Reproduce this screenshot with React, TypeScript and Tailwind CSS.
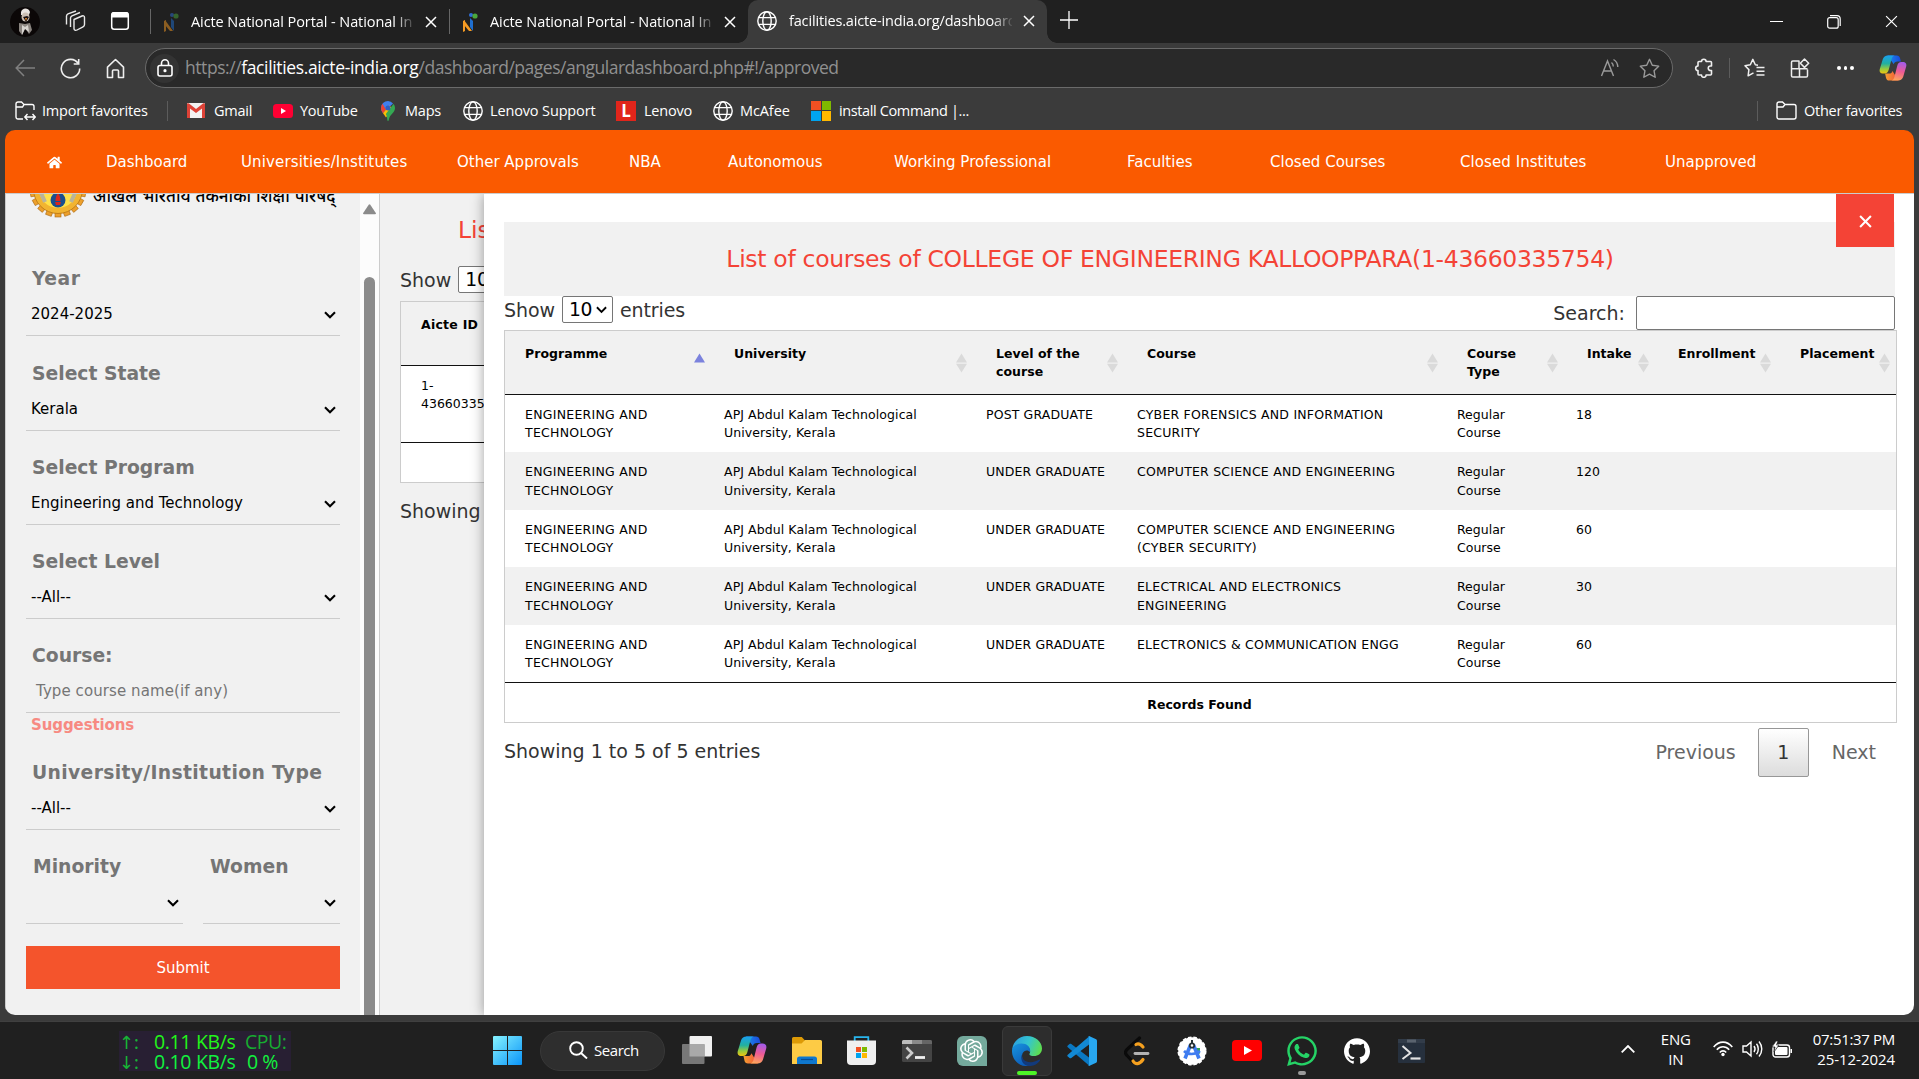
import React from "react";
import { SiOpenai, SiGithub } from "react-icons/si";
import { FaHome, FaWhatsapp } from "react-icons/fa";

const ui = "font-['Open_Sans','Noto_Sans',sans-serif]";
const verdana = "font-['DejaVu_Sans','Noto_Sans',sans-serif]";

/* ---------- small drawings ---------- */

function Globe({ size = 20 }: { size?: number }) {
  return (
    <svg width={size} height={size} viewBox="0 0 20 20" fill="none" stroke="#fff" strokeWidth="1.4" className="shrink-0">
      <circle cx="10" cy="10" r="9.2" />
      <ellipse cx="10" cy="10" rx="4.2" ry="9.2" />
      <path d="M1.8 6.6h16.4M1.8 13.4h16.4" />
    </svg>
  );
}

function Cross({ size = 12, color = "#fff", width = 1.5 }: { size?: number; color?: string; width?: number }) {
  return (
    <svg width={size} height={size} viewBox="0 0 12 12" stroke={color} strokeWidth={width} className="shrink-0">
      <path d="M1 1l10 10M11 1L1 11" />
    </svg>
  );
}

function Favicon() {
  return (
    <svg width="16" height="20" viewBox="0 0 16 20" className="shrink-0">
      <path d="M1 9l2-1v11l-2 1z" fill="#f59a23" />
      <path d="M2 8l8 11H7L2 13z" fill="#f59a23" />
      <path d="M8 6l3 3v10l-3-4z" fill="#1f6fd0" />
      <circle cx="9" cy="3" r="2" fill="#2f6fd8" />
      <circle cx="13" cy="4" r="2.6" fill="#4aa83c" />
    </svg>
  );
}

function Copilot({ id, className }: { id: string; className: string }) {
  return (
    <svg viewBox="0 0 30 28" className={className}>
      <defs>
        <linearGradient id={id + "a"} x1="0" y1="0" x2="0" y2="1">
          <stop offset="0" stopColor="#1aa0f0" />
          <stop offset=".45" stopColor="#22b0a0" />
          <stop offset=".75" stopColor="#9acb3c" />
          <stop offset="1" stopColor="#f2c40f" />
        </linearGradient>
        <linearGradient id={id + "b"} x1="0.6" y1="0" x2="0.4" y2="1">
          <stop offset="0" stopColor="#a35bea" />
          <stop offset=".5" stopColor="#ee5b93" />
          <stop offset="1" stopColor="#fda55c" />
        </linearGradient>
        <linearGradient id={id + "c"} x1="0" y1="0" x2="1" y2="0">
          <stop offset="0" stopColor="#1b8df0" />
          <stop offset="1" stopColor="#1b48d8" />
        </linearGradient>
        <linearGradient id={id + "d"} x1="0" y1="0" x2="1" y2="0">
          <stop offset="0" stopColor="#f5a030" />
          <stop offset="1" stopColor="#f0503c" />
        </linearGradient>
      </defs>
      <path d="M9 0.5h10c2 0 3 1 3.500 2.800l1.100 3.700h-4c-2 0-3.200 1-3.800 3z" fill={"url(#" + id + "c)"} />
      <path d="M21 27.500H11c-2 0-3-1-3.500-2.800L6.500 20h4.300c2 0 3-.8 3.600-2.800z" fill={"url(#" + id + "d)"} />
      <path d="M9.500 0.500h7.300c-2 .5-2.800 2-3.400 4l-3 11.500c-.7 2.600-2 4-4.400 4H4.500C1.500 20 0 18 .8 15L4 4.500C4.800 2 6.800.5 9.500.5z" fill={"url(#" + id + "a)"} />
      <path d="M20.500 27.500h-7.300c2-.5 2.800-2 3.400-4l3-12c.7-2.600 2-4 4.400-4h1.500c3 0 4.500 2 3.700 5L26 23.500c-.8 2.500-2.800 4-5.500 4z" fill={"url(#" + id + "b)"} />
    </svg>
  );
}

function SelectArrow() {
  return (
    <svg width="12" height="8" viewBox="0 0 12 8" fill="none" stroke="#000" strokeWidth="2.1" className="shrink-0">
      <path d="M1 1.300l5 5 5-5" />
    </svg>
  );
}

/* ---------- browser chrome ---------- */

function Tab({ title, width, active, dim }: { title: string; width: string; active?: boolean; dim?: boolean }) {
  return (
    <div className={`flex h-full items-center ${width}`}>
      <div className={`shrink-0 ${active ? "w-[32px]" : "w-[28px]"} ${dim ? "opacity-50" : ""}`}>{active ? <Globe /> : <Favicon />}</div>
      <div className={`mr-[11px] w-[223px] shrink-0 overflow-hidden whitespace-nowrap text-[14.5px] text-white [mask-image:linear-gradient(to_right,#000_91%,transparent_101%)] ${active ? "tracking-[-0.16px]" : "tracking-[-0.08px]"}`}>
        {title}
      </div>
      <Cross />
    </div>
  );
}

function TabBar() {
  return (
    <div className="flex h-[43px] items-center bg-[#202020] pl-[10px]">
      <svg width="30" height="30" viewBox="0 0 30 30">
        <circle cx="15" cy="15" r="15" fill="#0b0707" />
        <path d="M11 5c1-4 7-5 9 0l-1 3h-8z" fill="#e9e4e0" />
        <ellipse cx="15.500" cy="10" rx="4" ry="4.500" fill="#cbbfb4" />
        <path d="M13 10l3 5 3-5-2-1z" fill="#1a1010" />
        <path d="M15 11h2l-1 3z" fill="#e08a2c" />
        <path d="M9 16l6 1 5-1 2 7-3 4-4-6-3 7-3-4z" fill="#8b8580" />
        <path d="M12 18l3 2 3-2 1 7-4-3-3 6z" fill="#d8d4d0" />
      </svg>
      <svg width="22" height="22" viewBox="0 0 22 22" fill="none" stroke="#e8e8e8" strokeWidth="1.400" className="mb-px ml-[24px]">
        <path d="M10 9.500l8-3.500c1.500-.5 2.500 0 2.500 1.500v7c0 1-.5 1.800-1.500 2.300l-6 3.200c-1.500.8-3 .2-3-1.500z" strokeLinejoin="round" />
        <path d="M6.500 17V8c0-1 .5-1.700 1.500-2.200l8-3.300" />
        <path d="M2.500 14.500V6c0-1 .5-1.700 1.500-2.200L12 1" />
      </svg>
      <svg width="20" height="20" viewBox="0 0 20 20" className="mb-[2px] ml-[24px]">
        <rect x="1.700" y="1.700" width="16.600" height="16.600" rx="2.500" fill="none" stroke="#fff" strokeWidth="1.500" />
        <path d="M1.500 3a2 2 0 0 1 2-2h13a2 2 0 0 1 2 2v3.500h-17z" fill="#fff" />
      </svg>
      <div className="ml-5 h-[25px] w-px bg-[#666]" />
      <div className="h-[41px] pl-[12px]"><Tab title="Aicte National Portal - National In" width="w-[286px]" dim /></div>
      <div className="h-[25px] w-px bg-[#666]" />
      <div className="h-[41px] pl-[12px]"><Tab title="Aicte National Portal - National In" width="w-[287px]" /></div>
      <div className="relative ml-[-1px] h-full w-[299px] rounded-t-[10px] bg-[#3b3b3b] pl-[9px]">
        <div className="absolute bottom-0 left-[-10px] size-[10px] bg-[radial-gradient(circle_at_0_0,transparent_9.5px,#3b3b3b_10px)]" />
        <div className="absolute right-[-10px] bottom-0 size-[10px] bg-[radial-gradient(circle_at_100%_0,transparent_9.5px,#3b3b3b_10px)]" />
        <div className="h-[41px]"><Tab title="facilities.aicte-india.org/dashboard" width="w-full" active /></div>
      </div>
      <svg width="18" height="18" viewBox="0 0 18 18" stroke="#fff" strokeWidth="1.300" className="mt-[-3px] ml-[13px]">
        <path d="M9 0v18M0 9h18" />
      </svg>
      <div className="ml-auto flex items-center gap-[44px] pr-[21px]">
        <div className="h-px w-[13px] bg-white" />
        <svg width="14" height="14" viewBox="0 0 14 14" fill="none" stroke="#fff" strokeWidth="1.200">
          <rect x="0.700" y="2.700" width="10.500" height="10.500" rx="2" />
          <path d="M3 .7h7a3.200 3.200 0 0 1 3.200 3.200V11" />
        </svg>
        <Cross size={13} width={1.1} />
      </div>
    </div>
  );
}

function AddressBar() {
  return (
    <div className="flex h-[47px] items-start pt-[5px]">
      <div className="flex h-10 w-[145px] shrink-0 items-center">
        <svg width="20" height="18" viewBox="0 0 20 18" fill="none" stroke="#808080" strokeWidth="1.500" className="ml-[15px]">
          <path d="M9 1L1.200 9 9 17M1.200 9H20" />
        </svg>
        <svg width="21" height="21" viewBox="0 0 21 21" fill="none" stroke="#eee" strokeWidth="1.600" className="ml-[25px]">
          <path d="M18.200 5.500A9.200 9.200 0 1 0 19.700 10.500" />
          <path d="M18.700 1v5h-5" />
        </svg>
        <svg width="19" height="21" viewBox="0 0 19 21" fill="none" stroke="#eee" strokeWidth="1.600" strokeLinejoin="round" className="ml-[25px]">
          <path d="M1.500 9.200L9.500 1.500l8 7.700V19.500h-5v-6.500a1 1 0 0 0-1-1h-4a1 1 0 0 0-1 1v6.500h-5z" />
        </svg>
      </div>
      <div className="flex h-10 w-[1528px] shrink-0 items-center rounded-full border border-[#6a6a6a] bg-[#292929] pl-[4px]">
        <div className="flex size-[29px] items-center justify-center rounded-full bg-[#333]">
          <svg width="16" height="18" viewBox="0 0 16 18" fill="none" stroke="#fff" strokeWidth="1.600">
            <rect x="1" y="6.500" width="14" height="10.500" rx="2" />
            <path d="M4.500 6.500V4.300a3.500 3.500 0 0 1 7 0v2.200" />
            <circle cx="8" cy="11.700" r=".8" fill="#fff" />
          </svg>
        </div>
        <div className="mb-[2px] ml-[6px] text-[17.5px] tracking-[-0.44px] whitespace-nowrap text-[#909090]">
          https://<span className="tracking-[-0.36px] text-white">facilities.aicte-india.org</span><span className="tracking-[-0.480px]">/dashboard/pages/angulardashboard.php#!/approved</span>
        </div>
        <svg width="20" height="20" viewBox="0 0 20 20" fill="none" stroke="#9a9a9a" strokeWidth="1.400" className="ml-auto">
          <path d="M1.500 18L7.500 3l6 15M3.500 13h8M11.500 4.500c1.200 1 1.800 2.300 1.800 4M13.500 1.500c2.700 1.600 4.200 4.300 4.300 7.500" />
        </svg>
        <svg width="21" height="21" viewBox="0 0 24 24" fill="none" stroke="#9a9a9a" strokeWidth="1.600" strokeLinejoin="round" className="mr-3 ml-[19px]">
          <path d="M12 1.500l3.200 6.800 7.300 1-5.300 5.200 1.300 7.500L12 18.400 5.500 22l1.300-7.500L1.500 9.300l7.300-1z" />
        </svg>
      </div>
      <div className="flex h-10 items-center">
        <svg width="20" height="20" viewBox="0 0 20 20" fill="none" stroke="#eee" strokeWidth="1.600" strokeLinejoin="round" className="ml-[21px]">
          <path d="M7.500 3.500a2.300 2.300 0 0 1 4.600 0h4.400a1 1 0 0 1 1 1V8h-1a2.200 2.200 0 0 0 0 4.500h1V16a1 1 0 0 1-1 1h-4.400a2.300 2.300 0 0 1-4.600 0H5a1 1 0 0 1-1-1v-3.400a2.300 2.300 0 0 1 0-4.600V4.500a1 1 0 0 1 1-1z" />
        </svg>
        <div className="ml-[15px] h-5 w-px bg-[#5c5c5c]" />
        <svg width="21" height="20" viewBox="0 0 21 20" fill="none" stroke="#eee" strokeWidth="1.500" strokeLinejoin="round" className="ml-[14px]">
          <path d="M14 7.200l-2.700-.4L8.800 1.400 6.300 6.800 1 7.700l3.900 3.900-.8 6.200 5.400-3M12.500 9.500H20.500M12.500 13.200H20.500M12.500 17H20.500" />
        </svg>
        <svg width="20" height="20" viewBox="0 0 20 20" fill="none" stroke="#eee" strokeWidth="1.500" strokeLinejoin="round" className="ml-[25px]">
          <path d="M9 10V3H2.800A1.300 1.300 0 0 0 1.500 4.300V17.700A1.300 1.300 0 0 0 2.800 19H16.200a1.300 1.300 0 0 0 1.300-1.300V11.500M1.500 10.700H17.500M9.500 10.700V19" />
          <path d="M14.500 1l4.200 4.200-4.200 4.200-4.200-4.200z" />
        </svg>
        <div className="ml-[27px] flex gap-[3px]">
          <i className="size-[3.500px] rounded-full bg-white" />
          <i className="size-[3.500px] rounded-full bg-white" />
          <i className="size-[3.500px] rounded-full bg-white" />
        </div>
        <Copilot id="top" className="ml-[25px] h-[26px] w-[28px]" />
      </div>
    </div>
  );
}

function Favorite({ icon, label, className }: { icon: React.ReactNode; label: string; className: string }) {
  return (
    <div className={`flex shrink-0 items-center text-[14.5px] whitespace-nowrap text-white ${className}`}>
      {icon}
      <span>{label}</span>
    </div>
  );
}

function FavoritesBar() {
  return (
    <div className="flex h-10 items-center pt-px pl-[15px]">
      <Favorite
        className="w-[152px] gap-[6px] tracking-[-0.18px]"
        label="Import favorites"
        icon={
          <svg width="21" height="20" viewBox="0 0 21 20" fill="none" stroke="#fff" strokeWidth="1.400">
            <path d="M8 18H3a2 2 0 0 1-2-2V3a2 2 0 0 1 2-2h3.500l2.500 2.500L7.500 6H1M9 3.500h8a2 2 0 0 1 2 2V9M10 16h10M12.500 13L9.800 16l2.700 3M17.500 13l2.700 3-2.700 3" />
          </svg>
        }
      />
      <div className="h-5 w-px bg-[#5c5c5c]" />
      <Favorite
        className="ml-[19px] w-[86px] gap-[9px] tracking-[-0.25px]"
        label="Gmail"
        icon={
          <svg width="18" height="15" viewBox="0 0 18 15">
            <rect width="18" height="15" rx="1" fill="#f2f2f2" />
            <path d="M0 15V1.500C0 0 1 0 2 .5l7 5.500 7-5.500c1-.5 2-.5 2 1V15h-3V5.500L9 10 3 5.500V15z" fill="#dd4237" />
          </svg>
        }
      />
      <Favorite
        className="w-[108px] gap-[7px] tracking-[-0.3px]"
        label="YouTube"
        icon={
          <svg width="20" height="14" viewBox="0 0 20 14">
            <rect width="20" height="14" rx="3.500" fill="#ff0033" />
            <path d="M8 4l5 3-5 3z" fill="#fff" />
          </svg>
        }
      />
      <Favorite
        className="w-[82px] gap-[10px] tracking-[-0.2px]"
        label="Maps"
        icon={
          <svg width="14" height="20" viewBox="0 0 14 20">
            <path d="M7 0a7 7 0 0 0-7 7c0 2 .8 3.500 2 5l10-9.500A7 7 0 0 0 7 0z" fill="#3f7fee" />
            <path d="M0 7c0 2 .8 3.500 2 5.300L5 8.700 1.500 2.800A7 7 0 0 0 0 7z" fill="#ea4335" />
            <path d="M2 12.300c1 1.300 2 2.500 3 4.200l6.500-8.500-3-3.400z" fill="#fbbc04" />
            <path d="M12.500 3L4.800 13c1 1.800 1.300 3.500 1.500 6 .1 1.300 1.300 1.300 1.500 0C8.500 13 14 12 14 7c0-1.500-.6-3-1.500-4z" fill="#34a853" />
            <circle cx="7" cy="7" r="2.500" fill="#2f5fc0" />
          </svg>
        }
      />
      <Favorite className="w-[153px] gap-[7px] tracking-[-0.14px]" label="Lenovo Support" icon={<Globe />} />
      <Favorite
        className="w-[97px] gap-[8px] tracking-[-0.2px]"
        label="Lenovo"
        icon={<span className="flex size-5 items-center justify-center bg-[#e1251b] text-[17px] leading-none font-bold">L</span>}
      />
      <Favorite className="w-[98px] gap-[7px] tracking-[-0.1px]" label="McAfee" icon={<Globe />} />
      <Favorite
        className="gap-[8px] tracking-[-0.38px]"
        label="install Command |..."
        icon={
          <span className="grid size-5 grid-cols-2 gap-px">
            <i className="bg-[#f25022]" /><i className="bg-[#7fba00]" /><i className="bg-[#00a4ef]" /><i className="bg-[#ffb900]" />
          </span>
        }
      />
      <div className="ml-auto h-5 w-px bg-[#5c5c5c]" />
      <Favorite
        className="ml-[18px] w-[143px] gap-[7px] tracking-[-0.24px]"
        label="Other favorites"
        icon={
          <svg width="21" height="19" viewBox="0 0 21 19" fill="none" stroke="#fff" strokeWidth="1.400">
            <path d="M1 3a2 2 0 0 1 2-2h3.500L9 3.500h9a2 2 0 0 1 2 2V16a2 2 0 0 1-2 2H3a2 2 0 0 1-2-2zM1 6h6L9 3.500" />
          </svg>
        }
      />
    </div>
  );
}

/* ---------- page ---------- */

const navItems: [string, string][] = [
  ["Dashboard", "w-[135px]"],
  ["Universities/Institutes", "w-[216px] tracking-[0.14px]"],
  ["Other Approvals", "w-[172px]"],
  ["NBA", "w-[99px]"],
  ["Autonomous", "w-[166px]"],
  ["Working Professional", "w-[233px] tracking-[0.05px]"],
  ["Faculties", "w-[143px]"],
  ["Closed Courses", "w-[190px]"],
  ["Closed Institutes", "w-[205px] tracking-[0.07px]"],
  ["Unapproved", "w-[100px]"],
];

function Nav() {
  return (
    <nav className="flex h-[64px] shrink-0 items-center border-b border-[#ccc] bg-[#fa5a00] pt-[2px] pl-[42px] text-[15px] text-white">
      <FaHome className="mr-[44px] size-[15px]" />
      {navItems.map(([label, w]) => (
        <a key={label} className={`shrink-0 whitespace-nowrap ${w}`}>{label}</a>
      ))}
    </nav>
  );
}

function Field({ label, value, height = "h-[94px]", muted, inset = "pl-[5px]", labelClass = "pl-[6px]" }: { label: string; value: string; height?: string; muted?: boolean; inset?: string; labelClass?: string }) {
  return (
    <div className={`flex flex-col justify-end border-b border-[#ccc] ${height}`}>
      <div className={`text-[18.75px] leading-6 font-bold whitespace-nowrap text-[#757575] ${labelClass}`}>{label}</div>
      <div className={`mt-[9px] flex h-[35px] items-center justify-between pr-1 pb-[5px] text-[15px] ${inset} ${muted ? "tracking-[0.08px] text-[#757575]" : "text-black"}`}>
        <span className="mb-px whitespace-nowrap">{value}</span>
        {!muted && <SelectArrow />}
      </div>
    </div>
  );
}

const teeth = Array.from({ length: 18 }, (_, i) => i * 20);

function Sidebar() {
  return (
    <aside className="flex w-[375px] shrink-0 overflow-hidden border-r border-l border-[#ccc] bg-[#f1f1f1]">
      <div className="w-[354px] shrink-0 pr-[20px] pl-[20px]">
        <div className="flex h-[48px] items-start overflow-hidden">
          <svg width="58" height="58" viewBox="0 0 58 58" className="mt-[-34px] ml-[3px] shrink-0">
            {teeth.map((a) => (
              <rect key={a} x="26" y="1" width="6" height="8" fill="#eda02c" stroke="#a8660f" strokeWidth=".6" transform={`rotate(${a} 29 29)`} />
            ))}
            <circle cx="29" cy="29" r="24.500" fill="#f2b431" stroke="#b87413" strokeWidth=".8" />
            <circle cx="29" cy="29" r="19" fill="#ffe14a" />
            <path d="M12 33l4 9M46 33l-4 9" stroke="#b9b49a" strokeWidth="4" />
            <circle cx="29" cy="40" r="7.500" fill="#1b4f8f" />
            <path d="M29 33c2 3 2.500 5 2.500 8h-5c0-3 .5-5 2.500-8zM26 42h6l-1 3h-4z" fill="#d9261c" />
          </svg>
          <div className="mt-[-11px] ml-[6px] w-[246px] font-['Noto_Sans','Noto_Sans_Devanagari','Lohit_Devanagari','FreeSans',sans-serif] text-[17px] leading-[26px] font-medium [word-spacing:0.5px] whitespace-nowrap text-black">
            अखिल भारतीय तकनीकी शिक्षा परिषद्
          </div>
        </div>
        <Field label="Year" value="2024-2025" labelClass="pl-[6px] pt-px tracking-[0.5px]" />
        <Field label="Select State" value="Kerala" height="h-[95px]" />
        <Field label="Select Program" value="Engineering and Technology" />
        <Field label="Select Level" value="--All--" />
        <Field label="Course:" value="Type course name(if any)" muted inset="pl-[10px]" />
        <div className="h-[23px] pt-[3px] pl-[5px] text-[15px] leading-[18px] font-bold tracking-[-0.1px] text-[#f78a82]">Suggestions</div>
        <Field label="University/Institution Type" value="--All--" labelClass="pl-[6px] tracking-[0.34px]" />
        <div className="flex gap-5">
          <div className="w-[157px]"><Field label="Minority" value="" labelClass="pl-[7px]" /></div>
          <div className="w-[137px]"><Field label="Women" value="" labelClass="pl-[7px]" /></div>
        </div>
        <button className="mt-[22px] block h-[43px] w-full bg-[#f4542c] pt-px text-[15px] text-white">Submit</button>
      </div>
      <div className="flex w-[19px] shrink-0 flex-col items-center bg-[#fcfcfc] pt-[10px]">
        <svg width="13" height="11" viewBox="0 0 13 11" className="mb-[62px] shrink-0">
          <path d="M5.700.8a1 1 0 0 1 1.600 0L12.800 9c.4.700 0 1.200-.8 1.200H1C.2 10.200-.2 9.700.2 9z" fill="#8b8b8b" />
        </svg>
        <div className="w-[11px] flex-1 rounded-t-full bg-[#8b8b8b]" />
      </div>
    </aside>
  );
}

function PageSize() {
  return (
    <span className="mb-px flex h-[27px] w-[51px] shrink-0 items-center justify-between rounded-[2px] border border-[#767676] bg-white pr-[5px] pl-[6px] text-[18.750px] tracking-[-0.2px] text-black">
      10
      <svg width="11" height="8" viewBox="0 0 12 8" fill="none" stroke="#000" strokeWidth="2"><path d="M1 1l5 5 5-5" /></svg>
    </span>
  );
}

function BackgroundList() {
  return (
    <section className="w-[104px] shrink-0 overflow-hidden bg-[#f1f1f1] pl-[20px] text-[#333]">
      <div className="mt-[20px] w-[300px] pl-[58px] text-[23.500px] leading-8 text-[#f44336]">List of institutes</div>
      <div className="mt-[20px] flex w-[200px] items-center gap-[7px] text-[19px]">Show <PageSize /></div>
      <div className="mt-[6px] w-[300px] border border-[#ccc] text-[12.5px] leading-[18.500px] text-black">
        <div className="h-[64px] border-b border-[#111] bg-[#f1f1f1] pt-[14px] pl-[20px] font-bold tracking-[0.25px]">Aicte ID</div>
        <div className="h-[77px] border-b border-[#111] bg-white pt-[11px] pl-[20px]">1-<br />43660335754</div>
        <div className="h-[39px] bg-white" />
      </div>
      <div className="mt-[16px] w-[200px] text-[19px] leading-6">Showing</div>
    </section>
  );
}

function SortIcon({ asc, last }: { asc?: boolean; last?: boolean }) {
  return (
    <svg width="11" height="20" viewBox="0 0 11 20" className={`absolute top-[22px] ${last ? "right-[6px]" : "right-[9px]"}`}>
      <path d="M5.500 0.500L11 9.500H0z" fill={asc ? "#7b82dd" : "#dadada"} />
      {!asc && <path d="M5.500 19.500L11 10.800H0z" fill="#dadada" />}
    </svg>
  );
}

const columns: [React.ReactNode, string][] = [
  ["Programme", "w-[209px]"],
  ["University", "w-[262px]"],
  [<>Level of the<br />course</>, "w-[151px]"],
  ["Course", "w-[320px]"],
  [<>Course<br />Type</>, "w-[120px]"],
  ["Intake", "w-[91px]"],
  ["Enrollment", "w-[122px]"],
  ["Placement", "w-[116px]"],
];

const rows: [string, React.ReactNode, string, string, string][] = [
  ["POST GRADUATE", <>CYBER FORENSICS AND INFORMATION<br />SECURITY</>, "18", "h-[57px] bg-white", "pt-[11px] leading-[18px]"],
  ["UNDER GRADUATE", "COMPUTER SCIENCE AND ENGINEERING", "120", "h-[58px] bg-[#f1f1f1]", "pt-[10px] leading-[19px]"],
  ["UNDER GRADUATE", <>COMPUTER SCIENCE AND ENGINEERING<br />(CYBER SECURITY)</>, "60", "h-[57px] bg-white", "pt-[11px] leading-[18px]"],
  ["UNDER GRADUATE", <>ELECTRICAL AND ELECTRONICS<br />ENGINEERING</>, "30", "h-[58px] bg-[#f1f1f1]", "pt-[10px] leading-[19px]"],
  ["UNDER GRADUATE", "ELECTRONICS & COMMUNICATION ENGG", "60", "h-[57px] bg-white", "pt-[11px] leading-[18px]"],
];

function CoursesTable() {
  return (
    <div className="w-[1393px] border border-[#ccc]">
      <table className="w-[1391px] table-fixed border-separate border-spacing-0 text-left text-[12.5px] whitespace-nowrap text-black">
        <thead>
          <tr className="h-[64px] bg-[#f1f1f1]">
            {columns.map(([label, w], i) => (
              <th key={i} className={`relative border-b border-[#111] pt-[14px] pl-[20px] align-top leading-[18px] font-bold tracking-[0.03px] ${w}`}>
                {label}
                <SortIcon asc={i === 0} last={i === columns.length - 1} />
              </th>
            ))}
          </tr>
        </thead>
        <tbody>
          {rows.map(([level, course, intake, cls, cell], i) => (
            <tr key={i} className={`align-top ${cls}`}>
              <td className={`pl-[20px] tracking-[0.26px] ${cell}`}>ENGINEERING AND<br />TECHNOLOGY</td>
              <td className={`pl-[10px] tracking-[0.08px] ${cell}`}>APJ Abdul Kalam Technological<br />University, Kerala</td>
              <td className={`pl-[10px] tracking-[0.14px] ${cell}`}>{level}</td>
              <td className={`pl-[10px] tracking-[0.22px] ${cell}`}>{course}</td>
              <td className={`pl-[10px] ${cell}`}>Regular<br />Course</td>
              <td className={`pl-[9px] ${cell}`}>{intake}</td>
              <td />
              <td />
            </tr>
          ))}
        </tbody>
        <tfoot>
          <tr className="h-[40px]">
            <td colSpan={8} className="border-t border-[#111] pt-[6px] pr-[2px] text-center font-bold">Records Found</td>
          </tr>
        </tfoot>
      </table>
    </div>
  );
}

function CoursesModal() {
  return (
    <section className="relative z-10 flex-1 bg-white pt-[28px] pl-[20px] text-[#333] shadow-[0_0_12px_rgba(0,0,0,0.38)]">
      <button className="absolute top-0 right-[20px] flex h-[53px] w-[58px] items-center justify-center bg-[#f44336] pt-[2px]">
        <Cross size={13} width={1.900} />
      </button>
      <h1 className="flex h-[74px] w-[1391px] items-center justify-center bg-[#f1f1f1] pt-px pr-[59px] text-[23.5px] tracking-[-0.31px] whitespace-nowrap text-[#f44336]">
        List of courses of COLLEGE OF ENGINEERING KALLOOPPARA(1-43660335754)
      </h1>
      <div className="flex h-[34px] w-[1391px] items-start justify-between text-[19px]">
        <div className="flex items-center gap-[7px] tracking-[-0.1px]">Show <PageSize /> entries</div>
        <div className="flex items-center gap-[11px]">
          Search:
          <span className="h-[34px] w-[259px] rounded-[2px] border border-[#767676] bg-white" />
        </div>
      </div>
      <CoursesTable />
      <div className="flex w-[1391px] items-start justify-between pt-[5px] text-[19px]">
        <div className="mt-[9px]">Showing 1 to 5 of 5 entries</div>
        <div className="flex h-[49px] items-center text-[#666]">
          Previous
          <span className="mr-[23px] ml-[22px] flex h-[49px] w-[51px] items-center justify-center rounded-[2px] border border-[#979797] bg-linear-to-b from-white to-[#dcdcdc] text-[#333]">1</span>
          <span className="mr-[19px]">Next</span>
        </div>
      </div>
    </section>
  );
}

/* ---------- taskbar ---------- */

function Slot({ children, active, running }: { children: React.ReactNode; active?: boolean; running?: boolean }) {
  return (
    <div className={`relative mx-[2.500px] flex size-[50px] shrink-0 items-center justify-center rounded-md border ${active ? "border-[#3a3a3a] bg-[#2d2d2d]" : "border-transparent"}`}>
      {children}
      {active && <i className="absolute bottom-0 h-1 w-5 rounded-full bg-[#4df527]" />}
      {running && <i className="absolute bottom-0 h-1 w-2 rounded-full bg-[#9a9a9a]" />}
    </div>
  );
}

function Taskbar() {
  return (
    <footer className="flex h-[58px] items-center border-t border-[#404040] bg-[#202020]">
      <div className="ml-[119px] flex h-10 w-[172px] bg-[#281f33] pt-px text-[19.5px] leading-[20px] whitespace-nowrap">
        <div className="w-[35px] font-['Noto_Sans','DejaVu_Sans',sans-serif] text-[18px] text-[#17b436]"><p>↑:</p><p>↓:</p></div>
        <div className="w-[91px] tracking-[-0.35px]"><p className="text-[#22f51a]">0.11 KB/s</p><p className="text-[#12f23e]">0.10 KB/s</p></div>
        <div className="tracking-[-0.5px]"><p className="text-[#17ab30]">CPU:</p><p className="pl-[2px] text-[#12f23e]">0 %</p></div>
      </div>
      <svg width="29" height="29" viewBox="0 0 29 29" className="ml-[202px]">
        <defs>
          <linearGradient id="win" x1="0" y1="0" x2="1" y2="1">
            <stop offset="0" stopColor="#86f3ff" />
            <stop offset="1" stopColor="#0a94f8" />
          </linearGradient>
        </defs>
        <path d="M1 0h13v14H0V1a1 1 0 0 1 1-1zM15 0h13a1 1 0 0 1 1 1v13H15zM0 15h14v14H1a1 1 0 0 1-1-1zM15 15h14v13a1 1 0 0 1-1 1H15z" fill="url(#win)" />
      </svg>
      <div className="ml-[18px] flex h-10 w-[125px] items-center rounded-full border border-[#383838] bg-[#2e2e2e] pb-px pl-[28px] text-[15px] tracking-[-0.45px] text-white">
        <svg width="19" height="18" viewBox="0 0 19 18" fill="none" stroke="#fff" strokeWidth="1.900" className="mr-[6px]">
          <circle cx="7.500" cy="7.500" r="6.300" />
          <path d="M12 12l6 5.500" />
        </svg>
        Search
      </div>
      <div className="ml-[4px] flex">
        <Slot>
          <svg width="30" height="28" viewBox="0 0 30 28" className="mb-px">
            <rect x="7.500" width="22.500" height="20.500" rx="1" fill="#f0f0f0" />
            <rect y="8" width="22.500" height="20" rx="1" fill="#777" />
            <rect x="7.500" y="8" width="15" height="12.500" fill="#a9a9a9" />
          </svg>
        </Slot>
        <Slot><Copilot id="task" className="mb-px h-[28px] w-[30px]" /></Slot>
        <Slot>
          <svg width="30" height="27" viewBox="0 0 30 27">
            <path d="M0 1.500A1.500 1.500 0 0 1 1.500 0h8.300l3.200 3.500L10 8H0z" fill="#dd9a06" />
            <path d="M0 6.500h9.500L13 3h15.500A1.500 1.500 0 0 1 30 4.500V27H0z" fill="#fdcb45" />
            <path d="M5 27v-5a2.500 2.500 0 0 1 2.500-2.500h15A2.500 2.500 0 0 1 25 22v5z" fill="#0f78cf" />
            <path d="M9 22.500h12" stroke="#0a4d92" strokeWidth="1.200" />
          </svg>
        </Slot>
        <Slot>
          <svg width="29" height="29" viewBox="0 0 29 29">
            <path d="M7.700 6V1.200h13.600V6" fill="none" stroke="#28b6ee" strokeWidth="1.800" />
            <path d="M0 4.500h29V25a4 4 0 0 1-4 4H4a4 4 0 0 1-4-4z" fill="#efefef" />
            <path d="M9 11h5v5H9z" fill="#f25022" /><path d="M15 11h5v5h-5z" fill="#7fba00" />
            <path d="M9 17h5v5H9z" fill="#00a4ef" /><path d="M15 17h5v5h-5z" fill="#ffb900" />
          </svg>
        </Slot>
        <Slot>
          <svg width="30" height="22" viewBox="0 0 30 22">
            <rect width="30" height="22" rx="1.500" fill="#444" />
            <path d="M1.500 0H10v4H0V1.500A1.500 1.500 0 0 1 1.500 0z" fill="#bdbdbd" />
            <path d="M10 0h10v4H10z" fill="#8b8b8b" />
            <path d="M20 0h8.500A1.500 1.500 0 0 1 30 1.500V4H20z" fill="#666" />
            <path d="M4.500 7.500l5.500 5.500-5.500 5.500" fill="none" stroke="#ccc" strokeWidth="2.600" />
            <path d="M13 17.500h10" stroke="#f0f0f0" strokeWidth="2.800" />
          </svg>
        </Slot>
        <Slot>
          <div className="flex size-[30px] items-center justify-center rounded-md rounded-br-none bg-[#74a99c]"><SiOpenai className="size-[23px] text-white" /></div>
        </Slot>
        <Slot active>
          <svg width="30" height="30" viewBox="0 0 30 30">
            <defs>
              <linearGradient id="ed1" x1="0" y1="0.300" x2="1" y2="0.600">
                <stop offset="0" stopColor="#2a9ee0" /><stop offset=".5" stopColor="#34c5cf" /><stop offset="1" stopColor="#5fdf4c" />
              </linearGradient>
              <linearGradient id="ed2" x1="0" y1="0" x2=".6" y2="1">
                <stop offset="0" stopColor="#1896e0" /><stop offset="1" stopColor="#0c5bb8" />
              </linearGradient>
            </defs>
            <path d="M0.300 13C1 5.500 7.500 0 15 0c8.500 0 15 6 15 12.500 0 5-4 7.500-8 7.500-3.500 0-5-1.300-4.500-2.200 1.500-2.500.5-7.800-6-7.800C6 10 1.500 12.500.3 13z" fill="url(#ed1)" />
            <path d="M0 15C0 10 4.500 7.500 9.500 7.500c6.500 0 9.500 4.500 8.500 8.500-2-2.500-6-2-7.500 1.500-2 5 2.500 11 8 11.500-2 .9-3.500 1-5 1C6 29.500 0 23 0 15z" fill="url(#ed2)" />
            <path d="M10.500 17.500c-2 5 3 9.300 9 8.700 3.500-.4 6-1.700 7.800-2.700.6-.2 1 .3.700.9-3 4.400-7.500 5.600-10.500 5.600-6 0-10.500-6.500-7-12.500z" fill="#123a7c" />
          </svg>
        </Slot>
        <Slot>
          <svg width="30" height="30" viewBox="0 0 30 30">
            <path d="M0.800 9.500L2.500 8c.6-.5 1.200-.4 1.800 0L22 21.500v8L.8 11.300c-.7-.6-.6-1.300 0-1.800z" fill="#0a78c2" />
            <path d="M0.800 20.500L2.500 22c.6.500 1.200.4 1.800 0L22 8.500v-8L.8 18.700c-.7.600-.6 1.300 0 1.800z" fill="#1289d4" />
            <path d="M21 .3c.5-.4 1-.4 1.600-.1l6 2.900c.9.400 1.400 1 1.400 2v19.800c0 1-.5 1.600-1.400 2l-6 2.900c-.6.300-1.100.2-1.600-.1.600.3 1-.2 1-.8V1.100c0-.6-.4-1.100-1-.8z" fill="#28a7f0" />
          </svg>
        </Slot>
        <Slot>
          <svg width="26" height="30" viewBox="0 0 26 30" fill="none" strokeWidth="3.200" strokeLinecap="round">
            <path d="M15.500 2L3 13.500c-2 2-2 4 0 6L9 26" stroke="#0a0a0a" />
            <path d="M12 8.500c2.500-1.500 4.500-.5 7 2.500M9 25c2.500 4 6.500 3.500 10-1.500" stroke="#f5a01f" />
            <path d="M11 17.500h13" stroke="#b3b3b3" strokeWidth="2.800" />
          </svg>
        </Slot>
        <Slot>
          <svg width="30" height="30" viewBox="0 0 30 30">
            <circle cx="15" cy="15" r="13.800" fill="#fff" stroke="#fff" strokeWidth="1.500" strokeDasharray="3.500 2" />
            <path d="M18 12h5v5c-1 1.500-2 2-3 2z" fill="#35a457" />
            <path d="M13.500 9L8 22.500M16.500 9L22 22.500" stroke="#3f7cf0" strokeWidth="3.600" />
            <path d="M7 15c4 4 11 4 16 0" fill="none" stroke="#3f7cf0" strokeWidth="2.600" />
            <circle cx="15" cy="9.500" r="2.200" fill="#fff" stroke="#263238" strokeWidth="1.800" />
            <path d="M14 4h2v3h-2z" fill="#263238" />
          </svg>
        </Slot>
        <Slot>
          <svg width="30" height="21" viewBox="0 0 30 21">
            <rect width="30" height="21" rx="4" fill="#ff0000" />
            <path d="M12 6l8 4.500-8 4.500z" fill="#fff" />
          </svg>
        </Slot>
        <Slot running><FaWhatsapp className="size-[34px] text-[#25d366]" /></Slot>
        <Slot><SiGithub className="size-[26px] text-white" /></Slot>
        <Slot>
          <svg width="27" height="24" viewBox="0 0 27 24">
            <rect width="27" height="24" rx="1" fill="#26303d" />
            <rect width="27" height="4" fill="#323c49" /><rect x="9" y="0.500" width="9" height="3" fill="#5a636e" />
            <path d="M4.500 7l8 7-8 6" fill="none" stroke="#e4e4e4" strokeWidth="2" />
            <path d="M12.500 19.500h10" stroke="#e4e4e4" strokeWidth="2.200" />
          </svg>
        </Slot>
      </div>
      <div className="ml-auto flex items-center pr-[24px] pb-[3px] text-[15px] leading-5 text-white">
        <svg width="14" height="8" viewBox="0 0 14 8" fill="none" stroke="#fff" strokeWidth="1.800"><path d="M.7 7.300L7 1l6.300 6.300" /></svg>
        <div className="ml-[24px] w-[34px] text-center tracking-[-0.2px]"><p>ENG</p><p>IN</p></div>
        <svg width="20" height="16" viewBox="0 0 20 16" fill="none" stroke="#fff" strokeWidth="1.600" className="ml-[20px]">
          <path d="M.7 6C6-.5 14-.5 19.300 6M3.800 8.700c3.500-4 8.900-4 12.400 0M6.800 11.400c1.700-2 4.700-2 6.400 0" />
          <circle cx="10" cy="13.500" r="1.700" fill="#fff" stroke="none" />
        </svg>
        <svg width="21" height="18" viewBox="0 0 21 18" fill="none" stroke="#fff" strokeWidth="1.400" className="ml-[9px]">
          <path d="M1 6v6h3.500L9 16V2L4.500 6zM12 6c1.300 1.800 1.300 4.200 0 6M14.500 3.800c2.400 3 2.400 7.400 0 10.400M17 1.500c3.700 4.500 3.700 10.500 0 15" />
        </svg>
        <svg width="21" height="17" viewBox="0 0 21 17" className="ml-[9px]">
          <rect x="1" y="4" width="16.500" height="12" rx="2.500" fill="none" stroke="#fff" strokeWidth="1.400" />
          <rect x="3" y="6" width="12.500" height="8" rx="1" fill="#fff" />
          <path d="M18.500 8h1.500v4h-1.500z" fill="#fff" />
          <path d="M4 0L0 6h3l-1 5 5-7H4.500L6 0z" fill="#fff" stroke="#202020" strokeWidth=".7" />
        </svg>
        <div className="ml-[20px] text-right whitespace-nowrap"><p className="tracking-[-0.32px]">07:51:37 PM</p><p className="tracking-[-0.05px]">25-12-2024</p></div>
      </div>
    </footer>
  );
}

export default function App() {
  return (
    <div className={`flex h-[1079px] w-[1919px] flex-col overflow-hidden bg-[#3b3b3b] ${ui}`}>
      <TabBar />
      <AddressBar />
      <FavoritesBar />
      <main className={`mr-[5px] mb-[6px] ml-[5px] flex h-[885px] flex-col overflow-hidden rounded-[10px] ${verdana}`}>
        <Nav />
        <div className="flex min-h-0 flex-1 overflow-hidden">
          <Sidebar />
          <BackgroundList />
          <CoursesModal />
        </div>
      </main>
      <Taskbar />
    </div>
  );
}
